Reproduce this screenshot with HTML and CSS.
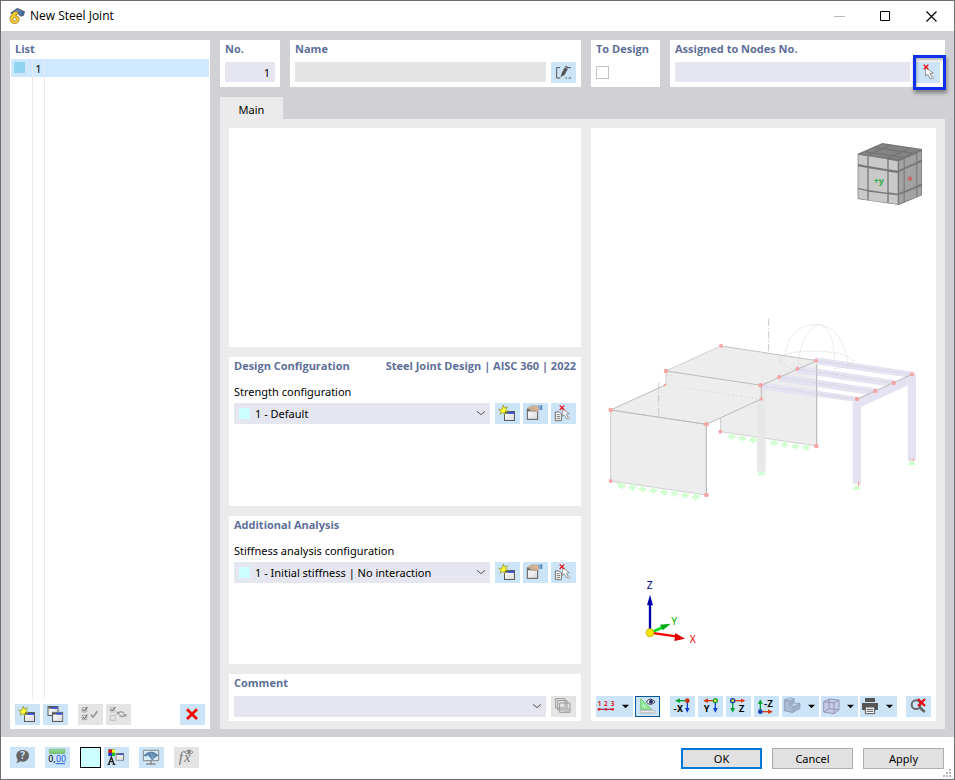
FILE: index.html
```html
<!DOCTYPE html>
<html lang="en">
<head>
  <meta charset="UTF-8">
  <meta name="viewport" content="width=device-width, initial-scale=1.0">
  <title>New Steel Joint</title>
  <link rel="stylesheet" href="styles.css">
</head>
<body>
  <!-- Shared icons -->
  <svg class="sprite" aria-hidden="true">
    <defs>
      <linearGradient id="paper" x1="0" y1="0" x2="1" y2="1">
        <stop offset="0" stop-color="#fff"/>
        <stop offset="1" stop-color="#d8d8d8"/>
      </linearGradient>
      <symbol id="window" viewBox="0 0 33 30">
        <rect x="1.5" y="1.5" width="30" height="27" fill="url(#paper)" stroke="#5a5a5a" stroke-width="3"/>
        <path d="M3 3h27v5H3z" fill="#555"/>
        <path d="M12 3h18v5H12z" fill="#3050e8"/>
      </symbol>
      <symbol id="new" viewBox="0 0 75 63">
        <use href="#window" x="27" y="24" width="33" height="30"/>
        <path d="M25 6l3 9 10-4-6 9 8 5-10 1-1 9-6-7-8 6 3-9-7-6 10 0z" fill="#ffff30" stroke="#8b8b20" stroke-width="2"/>
      </symbol>
      <symbol id="edit" viewBox="0 0 75 63">
        <rect x="13" y="18" width="31" height="31" fill="url(#paper)" stroke="#5a5a5a" stroke-width="3"/>
        <path d="M14 19h30v6H14z" fill="#666"/>
        <path d="M14 16q8-9 19-8l14 2 2 11-6 5-4-3-4 3-5-4-5 3-4-6z" fill="#d9b99b" stroke="#a1856d" stroke-width="1.5"/>
        <path d="M23 16l11-2M29 22l6-5M36 24l4-6" stroke="#a1856d" stroke-width="1.5"/>
        <path d="M46 8l12-2v15l-10-1z" fill="#5a8cc0"/>
        <path d="M50 7v13" stroke="#9fc3e4" stroke-width="3"/>
      </symbol>
      <symbol id="cursor" viewBox="0 0 34 42">
        <path d="M2 2l1 27 7-5 7 14 6-3-6-14 10-1z" fill="#fff" stroke="#777" stroke-width="2.5"/>
        <path d="M23 29l6 6-2 4-6-1" fill="#ddd" stroke="#777" stroke-width="1.5"/>
      </symbol>
      <symbol id="pick" viewBox="0 0 75 63">
        <path d="M13 27h12l6 6v20H13z" fill="#fff" stroke="#555" stroke-width="2.5"/>
        <path d="M17 35h9M17 41h10M17 47h10" stroke="#555" stroke-width="2.5"/>
        <use href="#cursor" x="32" y="15" width="29" height="36"/>
        <path d="M26 7l14 14M40 7L26 21" stroke="#e81010" stroke-width="3.5"/>
      </symbol>
      <symbol id="chevron" viewBox="0 0 30 18">
        <path d="M3 4l12 10L27 4" fill="none" stroke="#555" stroke-width="3"/>
      </symbol>
      <symbol id="support" viewBox="-10 -10 20 20">
        <path d="M-3-9h6v5h6v6l-6 1-3 6-3-6-6-1v-6h6z" fill="#d2ffd2"/>
      </symbol>
      <marker id="tip" viewBox="0 0 10 10" refX="7" refY="5" markerWidth="14" markerHeight="15" markerUnits="userSpaceOnUse" orient="auto">
        <path d="M0 0l10 5-10 5z" fill="context-stroke"/>
      </marker>
    </defs>
  </svg>

  <div class="dialog">
    <header class="titlebar">
      <svg class="logo" viewBox="0 0 48 48" aria-hidden="true">
        <path d="M5 15L25 1l22 10-4 12-8 2-8-8-14 4z" fill="#35619b" stroke="#555" stroke-width="2"/>
        <path d="M12 14l15-8 12 7M20 6l18 14" fill="none" stroke="#8fb0d8" stroke-width="2"/>
        <path d="M27 11H16Q5 19 3 32q0 14 13 15 14-1 15-13-1-11-12-12l8-6z" fill="#f5c92c" stroke="#8c7430" stroke-width="2"/>
        <circle cx="17" cy="34" r="5" fill="#fff" stroke="#8c7430" stroke-width="2"/>
      </svg>
      <h1>New Steel Joint</h1>
      <div class="window-controls">
        <button type="button" aria-label="Minimize" disabled>
          <svg viewBox="0 0 11 11"><path d="M0 5.5h11" stroke="#bbb"/></svg>
        </button>
        <button type="button" aria-label="Maximize">
          <svg viewBox="0 0 11 11"><path d="M.5.5h9v9h-9z" fill="none" stroke="#000"/></svg>
        </button>
        <button type="button" aria-label="Close">
          <svg viewBox="0 0 11 11"><path d="M.5.5l10 10M10.5.5l-10 10" stroke="#000" stroke-width="1.2"/></svg>
        </button>
      </div>
    </header>

    <main class="workspace">
      <section class="list">
        <h2>List</h2>
        <div class="list-rows">
          <div class="list-row">
            <span class="cell"><span class="row-color"></span></span>
            <span class="cell number">1</span>
          </div>
          <div class="list-lines"></div>
        </div>
        <div class="toolbar list-tools">
          <button type="button" class="tool" aria-label="New"><svg viewBox="0 0 75 63"><use href="#new"/></svg></button>
          <button type="button" class="tool" aria-label="Copy">
            <svg viewBox="0 0 75 63">
              <use href="#window" x="12" y="6" width="36" height="30"/>
              <use href="#window" x="27" y="23" width="34" height="31"/>
            </svg>
          </button>
          <button type="button" class="tool spaced" aria-label="Select all" disabled>
            <svg viewBox="0 0 75 63" fill="none" stroke="#8d8d8d" stroke-width="2">
              <path d="M13 11h13v13H13zM13 34h13v13H13z"/>
              <path d="M15 16l4 5 9-12M15 39l4 5 9-12" stroke="#555" stroke-width="3"/>
              <path d="M38 32l7 7 13-17" stroke="#999" stroke-width="5"/>
            </svg>
          </button>
          <button type="button" class="tool" aria-label="Invert selection" disabled>
            <svg viewBox="0 0 75 63" fill="none" stroke="#aaa" stroke-width="2">
              <path d="M13 11h13v13H13zM13 34h15v15H13z"/>
              <path d="M15 16l4 5 9-12" stroke="#555" stroke-width="3"/>
              <path d="M36 27q10-7 18 0M58 34q-9 7-18 0" stroke="#999" stroke-width="4"/>
              <path d="M32 21v10h11zM61 40V30H50z" fill="#999" stroke="none"/>
            </svg>
          </button>
          <button type="button" class="tool push" aria-label="Delete">
            <svg viewBox="0 0 75 63"><path d="M21 16l30 29M51 16L21 45" stroke="#f00" stroke-width="8"/></svg>
          </button>
        </div>
      </section>

      <div class="details">
        <div class="fields">
          <section class="card field-no">
            <h2><label for="no">No.</label></h2>
            <input id="no" type="text" value="1">
          </section>
          <section class="card field-name">
            <h2><label for="name">Name</label></h2>
            <div class="row">
              <input id="name" type="text" disabled>
              <button type="button" class="tool" aria-label="Edit name">
                <svg viewBox="0 0 75 63" fill="none" stroke="#555" stroke-width="3">
                  <path d="M27 17H17v31h11M49 17h11M43 48h5M53 48h7"/>
                  <path d="M29 46l3-13 12-22 9 5-12 22z" fill="#555" stroke="none"/>
                  <path d="M41 15l9 5" stroke="#cce4f7" stroke-width="2"/>
                </svg>
              </button>
            </div>
          </section>
          <section class="card field-design">
            <h2><label for="to-design">To Design</label></h2>
            <input id="to-design" type="checkbox">
          </section>
          <section class="card field-nodes">
            <h2><label for="nodes">Assigned to Nodes No.</label></h2>
            <div class="row">
              <input id="nodes" type="text">
              <button type="button" class="tool highlighted" aria-label="Select nodes">
                <svg viewBox="0 0 75 63">
                  <use href="#cursor" x="29" y="14" width="32" height="40"/>
                  <path d="M26 8l14 14M40 8L26 22" stroke="#e81010" stroke-width="4"/>
                </svg>
              </button>
            </div>
          </section>
        </div>

        <div class="tabs" role="tablist">
          <button type="button" class="tab" role="tab" aria-selected="true">Main</button>
        </div>

        <div class="tab-page" role="tabpanel">
          <div class="options">
            <section class="card"></section>

            <section class="card">
              <h2>Design Configuration <span>Steel Joint Design | AISC 360 | 2022</span></h2>
              <label class="caption" for="strength">Strength configuration</label>
              <div class="row">
                <div class="combo with-color">
                  <select id="strength"><option>1 - Default</option></select>
                  <svg class="arrow"><use href="#chevron"/></svg>
                </div>
                <div class="toolbar">
                  <button type="button" class="tool" aria-label="New configuration"><svg viewBox="0 0 75 63"><use href="#new"/></svg></button>
                  <button type="button" class="tool" aria-label="Edit configuration"><svg viewBox="0 0 75 63"><use href="#edit"/></svg></button>
                  <button type="button" class="tool" aria-label="Assign configuration"><svg viewBox="0 0 75 63"><use href="#pick"/></svg></button>
                </div>
              </div>
            </section>

            <section class="card">
              <h2>Additional Analysis</h2>
              <label class="caption" for="stiffness">Stiffness analysis configuration</label>
              <div class="row">
                <div class="combo with-color">
                  <select id="stiffness"><option>1 - Initial stiffness | No interaction</option></select>
                  <svg class="arrow"><use href="#chevron"/></svg>
                </div>
                <div class="toolbar">
                  <button type="button" class="tool" aria-label="New configuration"><svg viewBox="0 0 75 63"><use href="#new"/></svg></button>
                  <button type="button" class="tool" aria-label="Edit configuration"><svg viewBox="0 0 75 63"><use href="#edit"/></svg></button>
                  <button type="button" class="tool" aria-label="Assign configuration"><svg viewBox="0 0 75 63"><use href="#pick"/></svg></button>
                </div>
              </div>
            </section>

            <section class="card">
              <h2><label for="comment">Comment</label></h2>
              <div class="row">
                <div class="combo">
                  <select id="comment"><option></option></select>
                  <svg class="arrow"><use href="#chevron"/></svg>
                </div>
                <button type="button" class="tool" aria-label="Comment library" disabled>
                  <svg viewBox="0 0 75 63" fill="#e4e4e4" stroke="#9a9a9a" stroke-width="3">
                    <path d="M14 8h28v28H14zM20 14h28v28H20zM26 21h31v28H26z"/>
                    <path d="M44 38h9v9h-9zM47 44l5-5" stroke-width="2"/>
                  </svg>
                </button>
              </div>
            </section>
          </div>

          <section class="preview">
            <svg class="scene" viewBox="0 0 345 564" role="img" aria-label="Model preview">
              <!-- model -->
              <g transform="translate(-1 182) scale(.33333)">
                <path d="M392 108l288 44v256l-288-43z" fill="#ededed" stroke="#bbb" stroke-width="2"/>
                <g fill="#e3e3f1">
                  <path d="M953 205h25v246h-25zM788 275h25v247h-25z"/>
                  <path d="M978 190L801 265v28l11-2 166-76z"/>
                  <path d="M678 142l296 44-8 18-288-41zM622 167l289 43v22l-289-44zM567 192l289 43v22l-289-44zM512 217l290 43v17l-290-42z"/>
                </g>
                <path d="M501 235h26v248q-13 9-26 0z" fill="#e8e8e8"/>
                <path d="M62 300l166-76v-41l164-75 288 44-166 74v41l-165 76z" fill="#ededed"/>
                <path d="M62 300l287 43v212L62 513z" fill="#ededed" stroke="#bbb" stroke-width="2"/>
                <g fill="#e3e3f1">
                  <path d="M678 142l12 2v20l-12-1zM622 167l60 9v21l-60-9zM567 192l115 17v22l-115-17zM512 217l172 26v21l-172-26z"/>
                </g>
                <g fill="none" stroke="#bbb" stroke-width="3">
                  <path d="M228 224L62 300l287 43 165-76v-41l166-74M228 183l286 43M349 343v212M680 165v243M801 268l165-75"/>
                  <path d="M228 224v-41l164-75 288 44" stroke-width="2"/>
                </g>
                <g fill="none" stroke="#cdcdd6" stroke-width="2" stroke-dasharray="9 4">
                  <path d="M678 152l288 42M622 177l289 43M567 202l289 43M512 227l290 42"/>
                </g>
                <g fill="none" stroke="#c9c9c9" stroke-width="3" stroke-dasharray="22 6 4 6">
                  <path d="M536 26v106M206 217v104"/>
                </g>
                <g fill="none" stroke="#c8c8c8" stroke-width="2.5" stroke-dasharray="3 4">
                  <path d="M586 140q6-94 94-96 80 6 94 122M624 176q4-110 66-134 40 14 44 106M570 150q6-28 110-26 90 2 110 28M570 150q6 22 54 30M790 152q-6 20-60 24"/>
                  <path d="M700 236q60-20 72-60M272 232l240 36M206 318l38-20M230 196h14v12" stroke-dasharray="3 9"/>
                </g>
                <g fill="#f4a6a6">
                  <circle cx="62" cy="300" r="7"/><circle cx="349" cy="343" r="7"/>
                  <circle cx="62" cy="513" r="6"/><circle cx="349" cy="555" r="7"/>
                  <circle cx="228" cy="183" r="7"/><circle cx="225" cy="225" r="4"/>
                  <circle cx="393" cy="107" r="6"/><circle cx="512" cy="226" r="7"/>
                  <circle cx="514" cy="267" r="5"/><circle cx="567" cy="201" r="6"/>
                  <circle cx="622" cy="176" r="6"/><circle cx="678" cy="152" r="6"/>
                  <circle cx="391" cy="365" r="6"/><circle cx="679" cy="408" r="7"/>
                  <circle cx="801" cy="267" r="7"/><circle cx="856" cy="243" r="7"/>
                  <circle cx="911" cy="219" r="7"/><circle cx="966" cy="193" r="6"/>
                  <path d="M804 515h4v14h-4zM968 445h4v12h-4zM959 446h3v8h-3z"/>
                </g>
                <g>
                  <use href="#support" x="82" y="516" width="26" height="26"/>
                  <use href="#support" x="114" y="521" width="26" height="26"/>
                  <use href="#support" x="145" y="526" width="26" height="26"/>
                  <use href="#support" x="177" y="530" width="26" height="26"/>
                  <use href="#support" x="209" y="535" width="26" height="26"/>
                  <use href="#support" x="241" y="539" width="26" height="26"/>
                  <use href="#support" x="272" y="544" width="26" height="26"/>
                  <use href="#support" x="304" y="549" width="26" height="26"/>
                  <use href="#support" x="412" y="368" width="26" height="26"/>
                  <use href="#support" x="444" y="373" width="26" height="26"/>
                  <use href="#support" x="476" y="378" width="26" height="26"/>
                  <use href="#support" x="539" y="387" width="26" height="26"/>
                  <use href="#support" x="571" y="392" width="26" height="26"/>
                  <use href="#support" x="603" y="397" width="26" height="26"/>
                  <use href="#support" x="635" y="401" width="26" height="26"/>
                </g>
                <path d="M503 496l4-9h15l5 9zM788 539l8-12h8l8 12zM953 465l8-12h9l8 12zM76 515l14 5-6 6z" fill="#ccffcc"/>
              </g>

              <!-- view cube -->
              <g transform="translate(249 -8) scale(.33333)">
                <path d="M53 101l74-32 119 18v139l-69 29-124-18z" fill="#777"/>
                <path d="M62 101l65-28 110 16-62 28z" fill="#848484"/>
                <path d="M75 95l111 17M101 82l116 17M88 105l63-30M145 114l66-31" fill="none" stroke="#747474" stroke-width="4"/>
                <g fill="#c9c9c9">
                  <path d="M55 104l27 5v29l-27-6zM86 109l56 9v30l-56-10zM146 119l27 5v28l-27-4z"/>
                  <path d="M55 139l27 5v65l-27-5zM86 145l56 9v64l-56-8zM146 155l27 4v62l-27-4z"/>
                  <path d="M55 208l27 5v27l-27-5zM86 215l56 7v26l-56-7zM146 223l27 3v27l-27-4z"/>
                </g>
                <g fill="#a2a2a2">
                  <path d="M177 124l14-6v26l-14 6zM194 116l35-15v26l-35 15zM232 99l12-5v25l-12 5z"/>
                  <path d="M177 156l14-6v64l-14 5zM194 148l35-15v65l-35 14zM232 131l12-5v65l-12 5z"/>
                  <path d="M177 225l14-5v26l-14 6zM194 218l35-14v27l-35 14zM232 203l12-5v27l-12 5z"/>
                </g>
                <text x="101" y="191" class="cube-label">+y</text>
                <circle cx="210" cy="176" r="8" fill="#b08a8a"/>
                <circle cx="210" cy="176" r="4" fill="#d85050"/>
              </g>

              <!-- axes -->
              <g transform="translate(29 442) scale(.33333)">
                <path d="M90 188v-92" stroke="#0000a8" stroke-width="7"/>
                <path d="M90 74l9 32H81z" fill="#0000a8"/>
                <path d="M90 188l48-20" stroke="#00e020" stroke-width="8"/>
                <path d="M152 161l-24 20-8-17z" fill="#00a818"/>
                <path d="M90 188l78 11" stroke="#f00" stroke-width="7"/>
                <path d="M195 206l-32 7 3-24z" fill="#e00000"/>
                <circle cx="90" cy="188" r="12" fill="#f5e400" stroke="#b5a500" stroke-width="2"/>
                <text x="80" y="56" class="axis-label" fill="#000080">Z</text>
                <text x="154" y="166" class="axis-label" fill="#00b000">Y</text>
                <text x="209" y="219" class="axis-label" fill="#f00">X</text>
              </g>
            </svg>

            <div class="toolbar view-tools">
              <button type="button" class="tool wide" aria-label="Numbering">
                <svg viewBox="0 0 111 63">
                  <path d="M8 40h44" stroke="#203090" stroke-width="3"/>
                  <path d="M8 40h14M36 40h14" stroke="#e02020" stroke-width="3"/>
                  <g fill="#e02020"><circle cx="9" cy="40" r="4"/><circle cx="30" cy="40" r="4"/><circle cx="50" cy="40" r="4"/></g>
                  <g class="small-digits"><text x="5" y="30">1</text><text x="24" y="30">2</text><text x="44" y="30">3</text></g>
                  <path d="M78 26h21L88.500 37z" fill="#000"/>
                </svg>
              </button>
              <button type="button" class="tool active" aria-label="Show model">
                <svg viewBox="0 0 75 63">
                  <path d="M17 8v32h33z" fill="#90ee90" stroke="#62b262" stroke-width="2"/>
                  <path d="M24 24v9h10z" fill="#cce4f7"/>
                  <path d="M16 43h43v8H16z" fill="#fff" stroke="#999" stroke-width="2"/>
                  <path d="M22 46v4M28 46v4M34 46v4M40 46v4M46 46v4M52 46v4" stroke="#999" stroke-width="2"/>
                  <path d="M34 18q12-18 26 0-14 14-26 0z" fill="#fff" stroke="#334" stroke-width="3"/>
                  <circle cx="48" cy="17" r="6" fill="#223070"/>
                </svg>
              </button>
              <button type="button" class="tool spaced" aria-label="View in -X">
                <svg viewBox="0 0 75 63" stroke-width="4">
                  <path d="M52 14H20" stroke="#00a030" marker-end="url(#tip)"/>
                  <path d="M52 14v32" stroke="#1040d0" marker-end="url(#tip)"/>
                  <circle cx="52" cy="14" r="7" fill="#c83010"/>
                  <text x="10" y="47" class="view-label">-X</text>
                </svg>
              </button>
              <button type="button" class="tool" aria-label="View in Y">
                <svg viewBox="0 0 75 63" stroke-width="4">
                  <path d="M52 14H20" stroke="#d83a10" marker-end="url(#tip)"/>
                  <path d="M52 14v32" stroke="#1040d0" marker-end="url(#tip)"/>
                  <circle cx="52" cy="14" r="6" fill="#f0e030" stroke="#20a040" stroke-width="4"/>
                  <text x="17" y="47" class="view-label">Y</text>
                </svg>
              </button>
              <button type="button" class="tool" aria-label="View in Z">
                <svg viewBox="0 0 75 63" stroke-width="4">
                  <path d="M20 14h34" stroke="#d83a10" marker-end="url(#tip)"/>
                  <path d="M20 14v32" stroke="#00a030" marker-end="url(#tip)"/>
                  <circle cx="20" cy="14" r="6" fill="#f0e030" stroke="#1040a0" stroke-width="4"/>
                  <text x="38" y="47" class="view-label">Z</text>
                </svg>
              </button>
              <button type="button" class="tool" aria-label="View in -Z">
                <svg viewBox="0 0 75 63" stroke-width="4">
                  <path d="M19 47h33" stroke="#d83a10" marker-end="url(#tip)"/>
                  <path d="M19 47V14" stroke="#00a030" marker-end="url(#tip)"/>
                  <circle cx="19" cy="47" r="7" fill="#1040b0"/>
                  <text x="29" y="32" class="view-label">-Z</text>
                </svg>
              </button>
              <button type="button" class="tool wide" aria-label="Display style">
                <svg viewBox="0 0 111 63" stroke="#8296b4" stroke-width="1.500">
                  <path d="M7 11l18-5 12 3v14l17-2v17l-23 12-24-6z" fill="#9db0ca"/>
                  <path d="M7 11l17 4 13-6-12-3zM24 27l9 5 21-9-17-1z" fill="#c3d1e2"/>
                  <path d="M7 12l17 4v13l9 3v17L7 44z" fill="#a9bad2"/>
                  <path d="M78 26h21L88.500 37z" fill="#000" stroke="none"/>
                </svg>
              </button>
              <button type="button" class="tool wide" aria-label="Box view">
                <svg viewBox="0 0 111 63" stroke="#8a8ab0" stroke-width="2.500" fill="none">
                  <path d="M8 17l16-8 30 3v29l-15 12-31-5z" fill="#c5cbe5"/>
                  <path d="M8 17l31 4 15-9M39 21v32M24 9v29l30 3M24 38L8 48"/>
                  <path d="M78 26h21L88.500 37z" fill="#000" stroke="none"/>
                </svg>
              </button>
              <button type="button" class="tool wide" aria-label="Print">
                <svg viewBox="0 0 111 63">
                  <path d="M15 6h30v12H15z" fill="#555"/>
                  <path d="M6 21h48v21H6z" fill="#555"/>
                  <path d="M16 33h28v20H16z" fill="#fff" stroke="#555" stroke-width="3"/>
                  <path d="M20 40h20M20 46h20" stroke="#555" stroke-width="3"/>
                  <path d="M78 26h21L88.500 37z" fill="#000"/>
                </svg>
              </button>
              <button type="button" class="tool push" aria-label="Reset zoom">
                <svg viewBox="0 0 75 63">
                  <circle cx="30" cy="26" r="13" fill="#cce4f7" stroke="#666" stroke-width="6"/>
                  <path d="M40 33l16 15" stroke="#666" stroke-width="8"/>
                  <path d="M36 9l21 21M57 9L36 30" stroke="#e81010" stroke-width="7"/>
                </svg>
              </button>
            </div>
          </section>
        </div>
      </div>
    </main>

    <footer class="footer">
      <div class="toolbar footer-tools">
        <button type="button" class="tool" aria-label="Help">
          <svg viewBox="0 0 75 63">
            <path d="M38 9c11 0 19 7 19 17s-8 18-19 18q-4 0-7-1-6 5-13 6 5-5 5-11-4-5-4-12c0-10 8-17 19-17z" fill="#666"/>
            <text x="31" y="37" class="help-mark">?</text>
          </svg>
        </button>
        <button type="button" class="tool" aria-label="Units">
          <svg viewBox="0 0 75 63">
            <path d="M13 7h47v13H13z" fill="#8fd98f" stroke="#70b870" stroke-width="2"/>
            <path d="M19 13v7M25 13v7M31 13v7M37 13v7M43 13v7M49 13v7M55 13v7" stroke="#5ca35c" stroke-width="2"/>
            <text x="10" y="45" class="units-text">0,</text>
            <text x="33" y="45" class="units-text" fill="#2860d8">00</text>
            <path d="M32 50h28" stroke="#2860d8" stroke-width="3"/>
          </svg>
        </button>
        <button type="button" class="color-button" aria-label="Color"></button>
        <button type="button" class="tool" aria-label="Display properties">
          <svg viewBox="0 0 75 63">
            <path d="M13 7h20v20H13z" fill="#555"/>
            <path d="M14 8h9v9h-9z" fill="#f00"/><path d="M24 8h9v9h-9z" fill="#ff0"/>
            <path d="M14 18h9v9h-9z" fill="#2030f0"/><path d="M24 18h9v9h-9z" fill="#10c020"/>
            <path d="M14 52l8-22 8 22M16 44h13M11 52h7M26 52h8" fill="none" stroke="#222" stroke-width="4"/>
            <use href="#window" x="34" y="18" width="27" height="23"/>
          </svg>
        </button>
        <button type="button" class="tool" aria-label="View settings">
          <svg viewBox="0 0 75 63">
            <path d="M13 10h46v31H13z" fill="#d8ecfa" stroke="#888" stroke-width="3"/>
            <path d="M36 41v9M22 51h28" stroke="#888" stroke-width="4"/>
            <path d="M15 25q21-20 42 0l-9 5-8 9-7-9-5-6-9 3z" fill="#5f88ac" stroke="#456a8d" stroke-width="2"/>
            <path d="M23 21l14 14M35 17l8 18M48 20l-7 14" stroke="#8fb3d0" stroke-width="2"/>
          </svg>
        </button>
        <button type="button" class="tool" aria-label="Formula" disabled>
          <svg viewBox="0 0 75 63">
            <text x="14" y="46" class="fx">f</text>
            <text x="30" y="46" class="fx">x</text>
            <path d="M32 16q13-14 25 0-12 11-25 0z" fill="#eee" stroke="#777" stroke-width="2.500"/>
            <circle cx="45" cy="15" r="5" fill="#777"/>
          </svg>
        </button>
      </div>
      <div class="actions">
        <button type="button" class="action primary">OK</button>
        <button type="button" class="action">Cancel</button>
        <button type="button" class="action">Apply</button>
      </div>
      <svg class="grip" viewBox="0 0 8 8" aria-hidden="true">
        <path d="M6 0h2v2H6zM3 3h2v2H3zM6 3h2v2H6zM0 6h2v2H0zM3 6h2v2H3zM6 6h2v2H6z" fill="#bbb"/>
      </svg>
    </footer>
  </div>
</body>
</html>
```
FILE: styles.css
```css
* {
    box-sizing: border-box;
}
body {
    margin: 0;
    font-family: "Noto Sans", "Open Sans", sans-serif;
    font-size: 11px;
    line-height: 18px;
    color: #000;
}
button, input, select {
    font: inherit;
    color: inherit;
    margin: 0;
    padding: 0;
    border: none;
    border-radius: 0;
}
svg {
    display: block;
}
h1, h2 {
    margin: 0;
    font-size: 11px;
}
h2 {
    display: flex;
    justify-content: space-between;
    color: #5d6e98;
    font-family: "Open Sans", sans-serif;
    font-weight: 700;
}
.sprite {
    position: absolute;
    width: 0;
    height: 0;
}

/* Window frame */
.dialog {
    display: flex;
    flex-direction: column;
    min-height: 100vh;
    border: 1px solid #6e6e72;
    background: #fff;
}
.titlebar {
    display: flex;
    align-items: center;
    height: 30px;
    padding-left: 8px;
}
.titlebar h1 {
    margin-left: 5px;
    font-family: "Open Sans", sans-serif;
    font-size: 12px;
    font-weight: 400;
}
.logo {
    width: 16px;
    height: 16px;
}
.window-controls {
    display: flex;
    margin-left: auto;
}
.window-controls button {
    display: flex;
    align-items: center;
    justify-content: center;
    width: 46px;
    height: 30px;
    background: none;
}
.window-controls svg {
    width: 11px;
    height: 11px;
}
.workspace {
    flex: 1;
    display: flex;
    gap: 10px;
    padding: 9px 9px 8px;
    background: #d1d0d5;
}

/* Shared controls */
.card {
    padding: 0 5px 4px;
    background: #fff;
}
.row {
    display: flex;
    gap: 5px;
}
.toolbar {
    display: flex;
    gap: 3px;
}
.tool {
    flex: none;
    width: 25px;
    height: 21px;
    background: #cce4f7;
}
.tool svg {
    width: 100%;
    height: 100%;
}
.tool:disabled {
    background: #e4e4e4;
}
.tool.wide {
    width: 37px;
    margin-right: -1px;
}
.tool.spaced {
    margin-left: 7px;
}
.tool.push {
    margin-left: auto;
}
.tool.active {
    outline: 1px solid #00559b;
    outline-offset: -1px;
}
input[type="text"] {
    width: 100%;
    min-width: 0;
    height: 20px;
    padding: 0 5px;
    background: #e6e6f1;
}
input[type="text"]:disabled {
    background: #e4e4e4;
}
.combo {
    position: relative;
    flex: 1;
}
.combo select {
    display: block;
    width: 100%;
    height: 21px;
    padding: 0 20px 0 5px;
    appearance: none;
    background: #e6e6f1;
}
.combo.with-color select {
    padding-left: 21px;
}
.combo.with-color::before {
    content: "";
    position: absolute;
    top: 5px;
    left: 5px;
    width: 11px;
    height: 11px;
    background: #ccffff;
}
.combo .arrow {
    position: absolute;
    top: 7px;
    right: 4px;
    width: 10px;
    height: 6px;
    pointer-events: none;
}

/* List */
.list {
    flex: none;
    display: flex;
    flex-direction: column;
    width: 200px;
    background: #fff;
}
.list h2 {
    padding: 0 5px;
}
.list-rows {
    flex: 1;
    display: flex;
    flex-direction: column;
    margin: 1px 1px 5px;
}
.list-row {
    display: flex;
    height: 18px;
    background: #cde8ff;
}
.cell {
    width: 22px;
    padding: 3px;
    border-right: 1px solid #ebebeb;
}
.cell.number {
    width: 12px;
    padding: 1px 0 0;
    text-align: center;
}
.row-color {
    display: block;
    width: 11px;
    height: 11px;
    background: #8fd5f3;
}
.list-lines {
    flex: 1;
    width: 34px;
    border-right: 1px solid #ebebeb;
    background: linear-gradient(#ebebeb, #ebebeb) 21px 0 / 1px 100% no-repeat;
}
.list-tools {
    padding: 0 5px 4px;
}

/* Header fields */
.details {
    flex: 1;
    display: flex;
    flex-direction: column;
    min-width: 0;
}
.fields {
    display: grid;
    grid-template-columns: 60px 291fr 69px 275fr;
    gap: 10px;
}
.fields h2,
.options h2:has(label) {
    margin-bottom: 4px;
}
.field-no input {
    text-align: right;
}
.field-design input {
    display: block;
    width: 13px;
    height: 13px;
    margin-top: 8px;
    appearance: none;
    border: 1px solid #c3c3c3;
    background: #fff;
}
.highlighted {
    position: relative;
}
.highlighted::after {
    content: "";
    position: absolute;
    inset: -7px -6px -7px -2px;
    border: 3px solid #1030f0;
    box-shadow: 1px 3px 4px rgba(0, 0, 0, 0.4), inset 1px 2px 3px rgba(0, 0, 0, 0.3);
}

/* Tabs */
.tabs {
    display: flex;
    margin-top: 10px;
}
.tab {
    width: 63px;
    height: 22px;
    padding-top: 4px;
    background: #ebebeb;
}
.tab-page {
    flex: 1;
    display: grid;
    grid-template-columns: 352fr 345fr;
    gap: 10px;
    padding: 9px 9px 8px;
    background: #ebebeb;
}
.options {
    display: grid;
    grid-template-rows: 219fr 149fr 148fr auto;
    gap: 10px;
}
.caption {
    display: block;
    margin: 8px 0 2px;
}

/* Preview */
.preview {
    display: flex;
    flex-direction: column;
    min-width: 0;
    background: #fff;
    border-radius: 2px 2px 0 0;
}
.scene {
    flex: 1;
    width: 100%;
    min-height: 0;
}
.view-tools {
    padding: 4px 5px;
}
.cube-label {
    font-size: 27px;
    font-weight: 700;
    fill: #30b048;
}
.axis-label {
    font-size: 31px;
}
.view-label {
    font-family: Roboto, sans-serif;
    font-size: 28px;
    font-weight: 700;
}
.small-digits {
    font-size: 19px;
    font-weight: 700;
    fill: #e02020;
}
.help-mark {
    font-size: 30px;
    font-weight: 700;
    fill: #cce4f7;
}
.units-text {
    font-family: Roboto, sans-serif;
    font-size: 27px;
}
.fx {
    font-family: "Liberation Serif", serif;
    font-size: 45px;
    font-style: italic;
    fill: #777;
}

/* Footer */
.footer {
    position: relative;
    display: flex;
    justify-content: space-between;
    align-items: flex-start;
    height: 42px;
    padding: 10px 10px 0 9px;
}
.footer-tools {
    gap: 10px;
}
.color-button {
    width: 21px;
    height: 21px;
    margin-right: -7px;
    border: 1px solid #000;
    background: #ccffff;
}
.actions {
    display: flex;
    gap: 10px;
    padding-top: 1px;
}
.action {
    width: 81px;
    height: 21px;
    border: 1px solid #adadad;
    background: #e1e1e1;
}
.action.primary {
    border: 2px solid #0078d7;
}
.grip {
    position: absolute;
    right: 3px;
    bottom: 2px;
    width: 8px;
    height: 8px;
}
```
